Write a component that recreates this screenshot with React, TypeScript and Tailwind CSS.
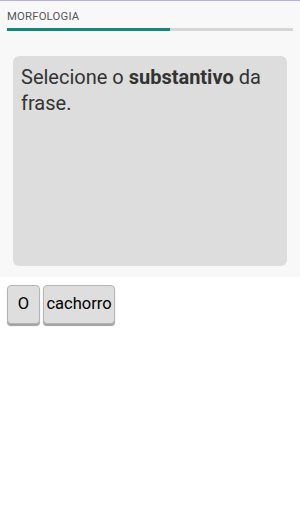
export default function App() {
  return (
    <div className="w-[300px] h-[514px] bg-white font-['Roboto',sans-serif] flex flex-col">
      <div className="bg-[#f8f8f8] border-t border-[#b8b0d8] flex flex-col">
        <div className="px-[7px] pt-[9px] text-[11.3px] leading-[14px] text-[#555] tracking-[0.2px]">MORFOLOGIA</div>
        <div className="mx-[7px] mt-[4px] h-[3px] bg-[#d6d6d6] flex">
          <div className="h-full w-[163px] bg-[#12877a]" />
        </div>
        <div className="mx-[13px] mt-[25px] mb-[11px] h-[210px] rounded-[6px] bg-[#dddddd] px-[8px] pt-[8px]">
          <p className="text-[20px] leading-[26px] text-[#333]">
            Selecione o <b className="font-bold">substantivo</b> da frase.
          </p>
        </div>
      </div>
      <div className="flex gap-[3px] px-[7px] pt-[8px]">
        <button className="h-[39px] w-[33px] rounded-[4px] border border-[#b5b5b5] bg-[#dedede] shadow-[0_2px_1px_#a0a0a0] text-[16.5px] text-black">O</button>
        <button className="h-[39px] w-[72px] rounded-[4px] border border-[#b5b5b5] bg-[#dedede] shadow-[0_2px_1px_#a0a0a0] text-[16.5px] text-black">cachorro</button>
      </div>
    </div>
  )
}
